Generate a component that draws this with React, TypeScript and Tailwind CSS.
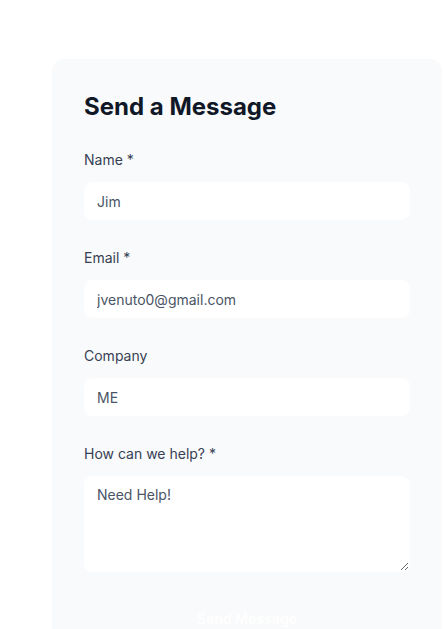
import { useState } from "react"

const fields = [
  { id: "name", label: "Name *", type: "text" },
  { id: "email", label: "Email *", type: "email" },
  { id: "company", label: "Company", type: "text" },
]

export default function App() {
  const [values, setValues] = useState<Record<string, string>>({
    name: "Jim",
    email: "jvenuto0@gmail.com",
    company: "ME",
    help: "Need Help!",
  })

  return (
    <div className="min-h-screen bg-white font-['Inter',sans-serif]">
      <div className="ml-[52px] mt-[59px] w-[390px] rounded-xl bg-gray-50 px-8 pt-8 pb-10">
        <h2 className="mb-[27px] text-2xl font-bold text-gray-900">
          Send a Message
        </h2>

        <form className="flex flex-col gap-[28px]" onSubmit={(e) => e.preventDefault()}>
          {fields.map((f) => (
            <div key={f.id} className="flex flex-col">
              <label htmlFor={f.id} className="mb-3 text-sm text-gray-700">
                {f.label}
              </label>
              <input
                id={f.id}
                type={f.type}
                value={values[f.id]}
                onChange={(e) => setValues({ ...values, [f.id]: e.target.value })}
                className="h-[38px] rounded-lg border border-white bg-white px-3 text-sm text-gray-600 outline-none"
              />
            </div>
          ))}

          {/* Message */}
          <div className="flex flex-col">
            <label htmlFor="help" className="mb-3 text-sm text-gray-700">
              How can we help? *
            </label>
            <textarea
              id="help"
              rows={4}
              value={values.help}
              onChange={(e) => setValues({ ...values, help: e.target.value })}
              className="block h-[96px] rounded-lg border border-white bg-white px-3 py-2 text-sm text-gray-600 outline-none"
            />
          </div>

          <button
            type="submit"
            className="-mt-[3px] rounded-lg py-3 text-sm font-semibold text-white"
          >
            Send Message
          </button>
        </form>
      </div>
    </div>
  )
}
